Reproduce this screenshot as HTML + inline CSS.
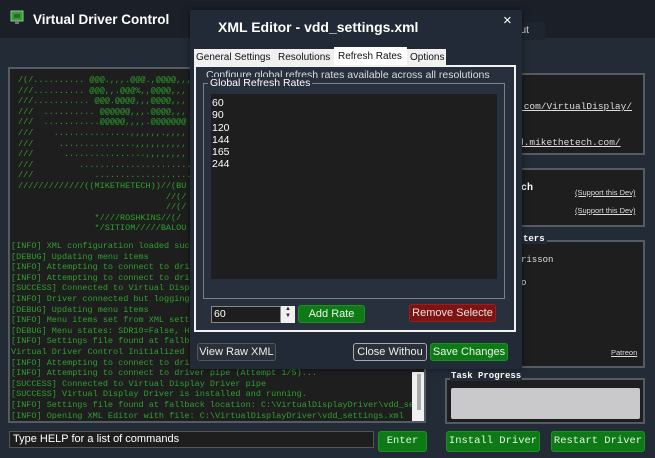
<!DOCTYPE html>
<html><head><meta charset="utf-8"><style>
*{margin:0;padding:0;box-sizing:border-box}
body{width:655px;height:458px;overflow:hidden;background:#222b36;font-family:"Liberation Sans",sans-serif;position:relative}
.abs{position:absolute}
.mono{font-family:"Liberation Mono",monospace}
#con{left:8px;top:67px;width:418px;height:356px;background:#1e1e1e;border:2px solid #555b63;overflow:hidden}
#con pre{position:absolute;font-family:"Liberation Mono",monospace;font-size:8.5px;line-height:10.6px;color:#2da12d;white-space:pre}
.btn{position:absolute;border-radius:3px;text-align:center;font-size:12px}
.g{background:#0e7a16;color:#e8f5e8;border:1px solid #1f8f2a}
.panel{position:absolute;background:#1e1e1e;border:2px solid #555b63}
.lnk{font-family:"Liberation Mono",monospace;font-size:9.5px;color:#ddd;text-decoration:underline}
.tab{position:absolute;top:42px;font-size:10px;color:#111;white-space:nowrap}
</style></head><body>
<div class="abs" style="left:0;top:0;width:655px;height:38px;background:#1b2028"></div>
<div class="abs" style="left:430px;top:22px;width:115px;height:18px;background:#1f252e"></div>
<div class="abs" style="left:515px;top:25px;color:#ddd;font-size:10px">out</div>
<svg class="abs" style="left:10px;top:10px" width="14" height="16"><rect x="1" y="1" width="12" height="10" fill="#3a9a3a" stroke="#8c8" stroke-width="1"/><rect x="4" y="4" width="6" height="4" fill="#2a6a2a"/><rect x="5" y="11" width="4" height="3" fill="#777"/></svg>
<div class="abs" style="left:33px;top:12px;color:#fff;font-weight:bold;font-size:13.5px">Virtual Driver Control</div>

<div id="con" class="abs">
<pre style="top:6px;left:8px">/(/.......... @@@.,,,.@@@.,@@@@,,,
///.......... @@@,,.@@@%,,@@@@,,,
///........... @@@.@@@@,,,@@@@,,,
///  .......... @@@@@@,,,.@@@@,,,
///  ...........@@@@@,,,,.@@@@@@@
///    ...............,,,,,,.,,,,
///     ...............,,,,,,,,,,
///      ................,,,,,,,,
///         ......................
///            ...................
/////////////((MIKETHETECH))//(BU
                             //(/
                             //(/
               *////ROSHKINS//(/
               */SITIOM/////BALOU</pre>
<pre style="top:172px;left:1px">[INFO] XML configuration loaded successfully
[DEBUG] Updating menu items
[INFO] Attempting to connect to driver pipe
[INFO] Attempting to connect to driver pipe
[SUCCESS] Connected to Virtual Display Driver pipe
[INFO] Driver connected but logging disabled
[DEBUG] Updating menu items
[INFO] Menu items set from XML settings
[DEBUG] Menu states: SDR10=False, HDR=False
[INFO] Settings file found at fallback location
Virtual Driver Control Initialized
[INFO] Attempting to connect to driver pipe
[INFO] Attempting to connect to driver pipe (Attempt 1/5)...
[SUCCESS] Connected to Virtual Display Driver pipe
[SUCCESS] Virtual Display Driver is installed and running.
[INFO] Settings file found at fallback location: C:\VirtualDisplayDriver\vdd_se
[INFO] Opening XML Editor with file: C:\VirtualDisplayDriver\vdd_settings.xml</pre>
<div class="abs" style="left:402px;top:303px;width:14px;height:51px;background:#f0f0f0"></div>
<div class="abs" style="left:407px;top:305px;width:4px;height:36px;background:#aaa"></div>
</div>

<div class="panel" style="left:500px;top:73px;width:145px;height:82px"></div>
<div class="abs lnk" style="left:518px;top:101px">.com/VirtualDisplay/</div>
<div class="abs lnk" style="left:518px;top:137px">d.mikethetech.com/</div>
<div class="panel" style="left:500px;top:168px;width:145px;height:59px"></div>
<div class="abs mono" style="left:521px;top:183px;color:#fff;font-weight:bold;font-size:10px">ch</div>
<div class="abs" style="left:575px;top:188px;color:#ddd;font-size:7.5px;text-decoration:underline">(Support this Dev)</div>
<div class="abs" style="left:575px;top:206px;color:#ddd;font-size:7.5px;text-decoration:underline">(Support this Dev)</div>
<div class="panel" style="left:500px;top:240px;width:145px;height:128px"></div>
<div class="abs mono" style="left:521px;top:234px;color:#fff;font-weight:bold;font-size:9px;background:#222b36;padding:0 2px">ters</div>
<div class="abs mono" style="left:521px;top:255px;color:#ddd;font-size:9px">risson</div>
<div class="abs mono" style="left:521px;top:278px;color:#ddd;font-size:9px">o</div>
<div class="abs" style="left:611px;top:348px;color:#ddd;font-size:7.5px;text-decoration:underline">Patreon</div>

<div class="panel" style="left:445px;top:378px;width:200px;height:46px;background:#1e1e1e"></div>
<div class="abs mono" style="left:450px;top:371px;color:#fff;font-weight:bold;font-size:9px;background:#222b36;padding:0 1px">Task Progress</div>
<div class="abs" style="left:451px;top:388px;width:189px;height:31px;background:#c9c9cb;border-radius:2px"></div>

<div class="abs" style="left:9px;top:431px;width:365px;height:17px;background:#1e1e1e;border:1px solid #555;color:#fff;font-size:11px;padding:1px 3px">Type HELP for a list of commands</div>
<div class="btn g mono" style="left:378px;top:431px;width:49px;height:21px;line-height:19px;font-size:10.5px">Enter</div>
<div class="btn g mono" style="left:446px;top:431px;width:94px;height:21px;line-height:19px;font-size:10.5px">Install Driver</div>
<div class="btn g mono" style="left:551px;top:431px;width:94px;height:21px;line-height:19px;font-size:10.5px">Restart Driver</div>

<!-- dialog -->
<div class="abs" style="left:190px;top:10px;width:332px;height:359px;background:#212a36;box-shadow:0 0 6px rgba(0,0,0,.5)">
<div class="abs" style="left:28px;top:9px;color:#fff;font-weight:bold;font-size:14px">XML Editor - vdd_settings.xml</div>
<div class="abs" style="left:313px;top:2px;color:#fff;font-size:15px">×</div>
<div class="abs" style="left:4px;top:39px;width:252px;height:16px;background:#f0f0f0"></div>
<div class="tab" style="left:6px">General Settings</div>
<div class="tab" style="left:88px">Resolutions</div>
<div class="abs" style="left:144px;top:37px;width:73px;height:19px;background:#fff;font-size:10px;color:#111;padding:4px 0 0 4px;white-space:nowrap">Refresh Rates</div>
<div class="tab" style="left:220px">Options</div>
<div class="abs" style="left:4px;top:55px;width:322px;height:267px;border:2px solid #f2f2f2;background:#27303c;overflow:hidden">
<div class="abs" style="left:10px;top:2px;color:#ddd;font-size:10.5px;white-space:nowrap">Configure global refresh rates available across all resolutions</div>
<div class="abs" style="left:7px;top:16px;width:302px;height:216px;border:1px solid #7b828b"></div>
<div class="abs" style="left:12px;top:10px;color:#fff;font-size:10.5px;background:#27303c;padding:0 2px">Global Refresh Rates</div>
<div class="abs" style="left:15px;top:27px;width:286px;height:185px;background:#1e1e1e;color:#fff;font-size:10.5px;line-height:12.3px;padding:3px 0 0 1px">60<br>90<br>120<br>144<br>165<br>244</div>
<div class="abs" style="left:15px;top:239px;width:70px;height:17px;background:#1e1e1e;border:1px solid #888;color:#fff;font-size:10.5px;padding:1px 2px">60</div>
<div class="abs" style="left:85px;top:239px;width:14px;height:17px;background:#f0f0f0;font-size:6px;line-height:7px;text-align:center;color:#222">▲<br>▼</div>
<div class="btn g" style="left:102px;top:238px;width:67px;height:18px;line-height:16px;font-size:11px">Add Rate</div>
<div class="btn" style="left:213px;top:237px;width:87px;height:18px;line-height:16px;font-size:11px;background:#7d1414;border:1px solid #962020;color:#f0e0e0">Remove Selecte</div>
</div>
<div class="btn" style="left:7px;top:333px;width:79px;height:18px;line-height:16px;background:#2a3038;border:1px solid #555;color:#eee;font-size:11px">View Raw XML</div>
<div class="btn" style="left:163px;top:333px;width:74px;height:18px;line-height:16px;background:#2a3038;border:1px solid #aaa;color:#eee;font-size:11px;white-space:nowrap;overflow:hidden">Close Withou</div>
<div class="btn g" style="left:240px;top:333px;width:78px;height:18px;line-height:16px;font-size:11px">Save Changes</div>
</div>
</body></html>
